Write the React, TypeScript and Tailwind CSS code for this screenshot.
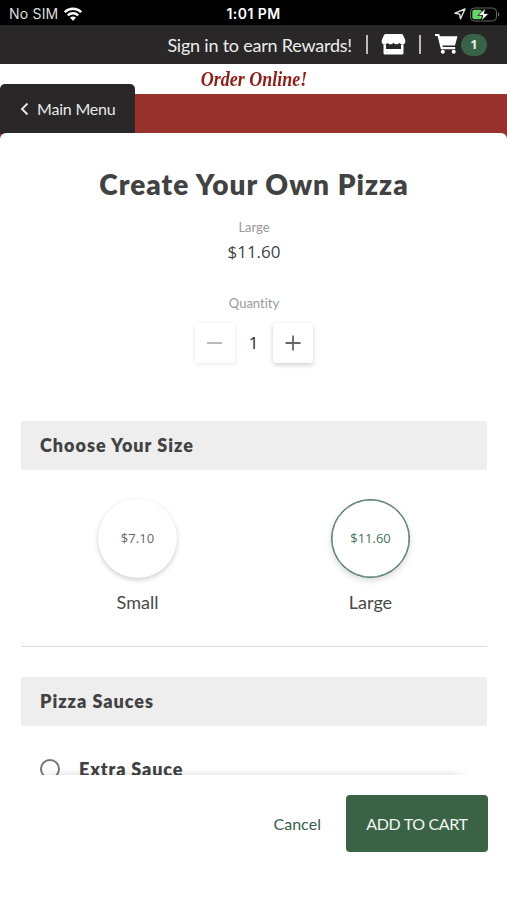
import type { ReactNode } from "react"

// Top iOS status bar
function StatusBar() {
  return (
    <div className="grid h-[25px] grid-cols-3 items-center bg-black pt-[3px] text-white">
      <div className="flex items-center gap-[6px] pl-[9px] font-['Inter',sans-serif] text-[14px] leading-none text-[#dedede]">
        <span className="tracking-[0.2px]">No SIM</span>
        <svg width="18" height="14" viewBox="0 0 18 14" fill="none">
          <path d="M.8 5.200C5.300.7 12.700.7 17.200 5.200" stroke="#fff" strokeWidth="2.500" />
          <path d="M3.800 8.300c2.800-2.800 7.600-2.800 10.400 0" stroke="#fff" strokeWidth="2.400" />
          <path d="M9 13.800 6 10.800c1.700-1.600 4.300-1.600 6 0z" fill="#fff" />
        </svg>
      </div>
      <span className="text-center font-['Inter',sans-serif] text-[14px] leading-none font-semibold tracking-[0.45px]">
        1:01 PM
      </span>
      <div className="flex items-center justify-end gap-[4px] pr-[6px]">
        <svg width="12" height="12" viewBox="0 0 12 12" fill="none">
          <path d="M11 1 1 5.200l4.600.9.900 4.700z" stroke="#e4e4e4" strokeWidth="1.400" strokeLinejoin="round" />
        </svg>
        <svg width="31" height="15" viewBox="0 0 31 15">
          <rect x=".500" y="1" width="26" height="13" rx="4" fill="none" stroke="#666" />
          <path d="M28 5.300c1.600.6 1.600 3.800 0 4.400z" fill="#777" />
          <rect x="2.300" y="2.800" width="9.500" height="9.400" rx="2" fill="#62d667" />
          <path d="M16.200.6 7.800 8.400h5.100l-2 6 8.200-8h-5z" fill="#fff" stroke="#000" strokeWidth=".8" />
        </svg>
      </div>
    </div>
  )
}

function TopNav() {
  return (
    <nav className="flex h-[39px] items-center justify-end bg-[#292728] pr-[20px] text-[#ececec]">
      <span className="text-[18px] leading-none tracking-[-0.22px]">Sign in to earn Rewards!</span>
      <span className="ml-[14px] h-[19px] w-[2px] bg-[#bbb]" />
      {/* store */}
      <svg className="ml-[13px]" width="25" height="21" viewBox="0 0 24 21" fill="#fff">
        <path d="M4 0h16q1 0 1.500 1l2 4.500c1 3-.5 5-2.500 5-1.500 0-2.700-.8-3.300-1.700-1.400 2-4 2-5.700 0-1.600 2-4.400 2-5.700 0C5.500 9.700 4.500 10.500 3 10.500.8 10.500-.5 8.500.5 5.500L2.500 1Q3 0 4 0z" />
        <path d="M2 10.500h2.500v4.500h15v-4.500H22V19q0 1.500-1.500 1.500h-17Q2 20.500 2 19z" />
      </svg>
      <span className="ml-[13px] h-[19px] w-[2px] bg-[#bbb]" />
      {/* cart */}
      <svg className="ml-[14px] -translate-y-px" width="23" height="20" viewBox="0 0 23 20" fill="#fff">
        <path d="M0 0h4.300l.6 2.200h17.600L20 11.500H7.400l.4 1.600h12.400v2.200H5.900L2.600 2H0z" />
        <circle cx="7.800" cy="17.700" r="2" />
        <circle cx="18.700" cy="17.700" r="2" />
      </svg>
      <span className="ml-[3px] flex h-[22px] w-[26px] items-center justify-center rounded-full bg-[#386346] font-['Open_Sans',sans-serif] text-[13px] leading-none font-bold">
        1
      </span>
    </nav>
  )
}

function SectionTitle({ children }: { children: ReactNode }) {
  return (
    <h2 className="flex h-[49px] items-center rounded-[2px] bg-[#eee] pl-[19px] text-[18px] font-extrabold tracking-[0.98px] text-[#424242]">
      {children}
    </h2>
  )
}

function SizeOption({ price, label, selected = false }: { price: string; label: string; selected?: boolean }) {
  return (
    <div className="flex flex-1 flex-col items-center">
      <div
        className={
          selected
            ? "flex size-[79px] items-center justify-center rounded-full border border-[#47705a] font-['Open_Sans',sans-serif] text-[13px] text-[#42745a] shadow-[inset_0_0_0_0.5px_#47705a,0_3px_6px_rgba(0,0,0,0.14)]"
            : "flex size-[79px] items-center justify-center rounded-full font-['Open_Sans',sans-serif] text-[13px] tracking-[0.1px] text-[#666] shadow-[0_2px_5px_rgba(0,0,0,0.2)]"
        }
      >
        {price}
      </div>
      <span className="mt-[13px] text-[18px] leading-[22px] text-[#484848]">{label}</span>
    </div>
  )
}

export default function App() {
  return (
    <main className="flex h-[900px] w-[507px] flex-col overflow-hidden bg-white font-['Lato',sans-serif] [font-variant-ligatures:none]">
      <StatusBar />
      <TopNav />

      {/* banner, the menu tab hangs over both strips */}
      <header className="relative">
        <div className="flex h-[30px] items-center justify-center">
          <span className="scale-x-[0.9] pl-[2px] font-['Liberation_Serif',serif] text-[20px] leading-none font-bold whitespace-nowrap text-[#951b13] italic">
            Order Online!
          </span>
        </div>
        <div className="h-[46px] bg-[#99312d]" />
        <button className="absolute top-[20px] left-0 flex h-[50px] w-[135px] items-center rounded-t-[5px] bg-[#292728] pl-[20px] text-[16px] text-[#e8e8e8]">
          <svg width="9" height="14" viewBox="0 0 9 14" fill="none" stroke="currentColor" strokeWidth="1.900">
            <path d="M7.500 1.500 2 7l5.500 5.500" />
          </svg>
          <span className="ml-[8px] tracking-[-0.2px]">Main Menu</span>
        </button>
      </header>

      <section className="relative -mt-[7px] flex h-[642px] flex-col overflow-hidden rounded-t-[6px] bg-white pt-[34px] pr-[20px] pl-[21px]">
        <h1 className="text-center text-[28px] leading-[34px] font-extrabold tracking-[1.05px] text-[#424242]">
          Create Your Own Pizza
        </h1>
        <p className="mt-[17px] text-center text-[13px] leading-[18px] text-[#999]">Large</p>
        <p className="mt-[5px] text-center font-['Open_Sans',sans-serif] text-[17px] leading-[22px] text-[#444]">
          $11.60
        </p>

        <p className="mt-[31px] text-center text-[13px] leading-[18px] text-[#999]">Quantity</p>
        <div className="mt-[11px] flex items-center justify-center pr-px">
          <button className="flex size-[40px] items-center justify-center rounded-[3px] shadow-[0_1px_4px_rgba(0,0,0,0.1)]">
            <span className="h-[1.5px] w-[15px] bg-[#bbb]" />
          </button>
          <span className="w-[38px] text-center font-['Open_Sans',sans-serif] text-[17px] leading-[24px] text-[#292929]">
            1
          </span>
          <button className="flex size-[40px] items-center justify-center rounded-[3px] shadow-[0_2px_5px_rgba(0,0,0,0.19)]">
            <svg width="16" height="16" viewBox="0 0 16 16" stroke="#666" strokeWidth="1.800">
              <path d="M.5 8h15M8 .5v15" />
            </svg>
          </button>
        </div>

        <div className="mt-[58px]">
          <SectionTitle>Choose Your Size</SectionTitle>
        </div>
        <div className="mt-[29px] flex">
          <SizeOption price="$7.10" label="Small" />
          <SizeOption price="$11.60" label="Large" selected />
        </div>
        <hr className="mt-[33px] border-t border-[#ddd]" />

        <div className="mt-[30px]">
          <SectionTitle>Pizza Sauces</SectionTitle>
        </div>
        <label className="mt-[31px] flex items-center pl-[19px] text-[18px] leading-[24px] font-extrabold text-[#424242]">
          <span className="size-[20px] rounded-full border-2 border-[#777]" />
          <span className="ml-[19px] tracking-[0.85px]">Extra Sauce</span>
        </label>
      </section>

      {/* bottom bar */}
      <footer className="relative flex flex-1 items-start justify-end pt-[20px] pr-[19px]">
        <div className="absolute -top-[6px] left-[36px] h-[6px] w-[436px] bg-linear-to-b from-transparent to-black/8 mask-x-from-95% mask-x-to-100%" />
        <button className="mr-[25px] h-[57px] text-[16px] tracking-[0.05px] text-[#355f4c]">Cancel</button>
        <button className="h-[57px] w-[142px] rounded-[4px] bg-[#3a6346] text-[16px] tracking-[-0.35px] text-[#f1f7f1]">
          ADD TO CART
        </button>
      </footer>
    </main>
  )
}
